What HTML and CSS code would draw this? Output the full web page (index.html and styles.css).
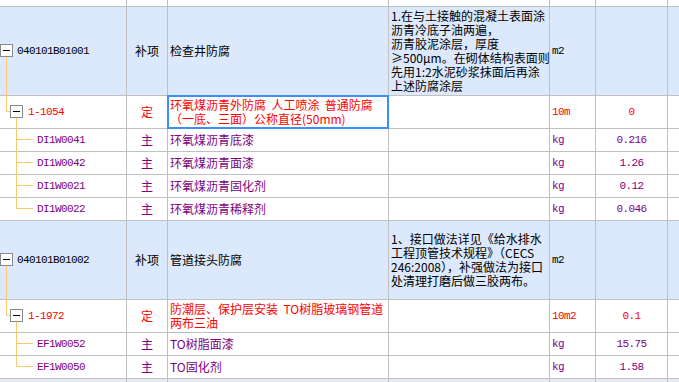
FILE: index.html
```html
<!DOCTYPE html>
<html lang="zh">
<head>
<meta charset="utf-8">
<title>清单</title>
<link rel="stylesheet" href="styles.css">
</head>
<body>
<div class="sheet">
  <div class="c"></div><div class="c"></div><div class="c"></div><div class="c"></div><div class="c"></div><div class="c"></div><div class="c"></div>

  <div class="c b code l1">040101B01001</div>
  <div class="c b ctr">补项</div>
  <div class="c b name">检查井防腐</div>
  <div class="c b desc">1.在与土接触的混凝土表面涂<br>沥青冷底子油两遍，<br>沥青胶泥涂层，厚度<br>≥500μm。在砌体结构表面则<br>先用1:2水泥砂浆抹面后再涂<br>上述防腐涂层</div>
  <div class="c b unit">m2</div>
  <div class="c b"></div>
  <div class="c b"></div>

  <div class="c code l2 red">1-1054</div>
  <div class="c ctr red">定</div>
  <div class="c name two red sel">环氧煤沥青外防腐&nbsp; 人工喷涂&nbsp; 普通防腐<br>（一底、三面）公称直径(50mm)</div>
  <div class="c"></div>
  <div class="c unit red">10m</div>
  <div class="c num red">0</div>
  <div class="c"></div>

  <div class="c code l3 pur">DI1W0041</div>
  <div class="c ctr pur">主</div>
  <div class="c name pur">环氧煤沥青底漆</div>
  <div class="c"></div>
  <div class="c unit pur">kg</div>
  <div class="c num pur">0.216</div>
  <div class="c"></div>

  <div class="c code l3 pur">DI1W0042</div>
  <div class="c ctr pur">主</div>
  <div class="c name pur">环氧煤沥青面漆</div>
  <div class="c"></div>
  <div class="c unit pur">kg</div>
  <div class="c num pur">1.26</div>
  <div class="c"></div>

  <div class="c code l3 pur">DI1W0021</div>
  <div class="c ctr pur">主</div>
  <div class="c name pur">环氧煤沥青固化剂</div>
  <div class="c"></div>
  <div class="c unit pur">kg</div>
  <div class="c num pur">0.12</div>
  <div class="c"></div>

  <div class="c code l3 pur">DI1W0022</div>
  <div class="c ctr pur">主</div>
  <div class="c name pur">环氧煤沥青稀释剂</div>
  <div class="c"></div>
  <div class="c unit pur">kg</div>
  <div class="c num pur">0.046</div>
  <div class="c"></div>

  <div class="c b code l1">040101B01002</div>
  <div class="c b ctr">补项</div>
  <div class="c b name">管道接头防腐</div>
  <div class="c b desc">1、接口做法详见《给水排水<br>工程顶管技术规程》（CECS<br>246:2008），补强做法为接口<br>处清理打磨后做三胶两布。</div>
  <div class="c b unit">m2</div>
  <div class="c b"></div>
  <div class="c b"></div>

  <div class="c code l2 red">1-1972</div>
  <div class="c ctr red">定</div>
  <div class="c name two red">防潮层、保护层安装&nbsp; TO树脂玻璃钢管道<br>两布三油</div>
  <div class="c"></div>
  <div class="c unit red">10m2</div>
  <div class="c num red">0.1</div>
  <div class="c"></div>

  <div class="c code l3 pur">EF1W0052</div>
  <div class="c ctr pur">主</div>
  <div class="c name pur">TO树脂面漆</div>
  <div class="c"></div>
  <div class="c unit pur">kg</div>
  <div class="c num pur">15.75</div>
  <div class="c"></div>

  <div class="c code l3 pur">EF1W0050</div>
  <div class="c ctr pur">主</div>
  <div class="c name pur">TO固化剂</div>
  <div class="c"></div>
  <div class="c unit pur">kg</div>
  <div class="c num pur">1.58</div>
  <div class="c"></div>

  <div class="c g"></div><div class="c g"></div><div class="c g"></div><div class="c g"></div><div class="c g"></div><div class="c g"></div><div class="c g"></div>

  <svg class="tree" width="40" height="382" viewBox="0 0 40 382">
    <g class="link">
      <path d="M6.5 57 V111.5 H10"/>
      <path d="M16.5 118 V208.5"/>
      <path d="M16.5 139.5 H33 M16.5 162.5 H33 M16.5 185.5 H33 M16.5 208.5 H33"/>
      <path d="M6.5 266 V315.5 H10"/>
      <path d="M16.5 322 V366.5"/>
      <path d="M16.5 343.5 H33 M16.5 366.5 H33"/>
    </g>
    <g class="box">
      <rect x="0.5" y="44.5" width="12" height="12"/>
      <rect x="10.5" y="105.5" width="12" height="12"/>
      <rect x="0.5" y="253.5" width="12" height="12"/>
      <rect x="10.5" y="309.5" width="12" height="12"/>
    </g>
    <g class="minus">
      <path d="M3 50.5 H10 M13 111.5 H20 M3 259.5 H10 M13 315.5 H20"/>
    </g>
  </svg>
</div>
</body>
</html>
```
FILE: styles.css
```css
html, body {
  margin: 0;
  padding: 0;
  background: #ffffff;
}

.sheet {
  position: relative;
  width: 679px;
  height: 382px;
  overflow: hidden;
  display: grid;
  grid-template-columns: 126px 40px 220px 160px 45px 71px 1fr;
  grid-template-rows: 6px 88px 32px 22px 22px 22px 22px 78px 32px 22px 22px 1fr;
  gap: 1px;
  background: #c0c0c0;
  font-family: "Noto Sans CJK SC", "Noto Sans", sans-serif;
  font-size: 12px;
  color: #000000;
}

.c {
  background: #ffffff;
  display: flex;
  align-items: center;
  min-width: 0;
  overflow: hidden;
  white-space: nowrap;
  line-height: 14px;
}

.b {
  background: #dce8fb;
}

.g {
  background: #e6ebf3;
}

.code {
  font-family: "Liberation Mono", monospace;
  font-size: 11px;
  letter-spacing: -0.6px;
}

.l1 { padding-left: 17px; }
.l2 { padding-left: 28px; }
.l3 { padding-left: 37px; }

.ctr {
  justify-content: center;
}

.name {
  padding-left: 2px;
}

.two {
  line-height: 14px;
}

.desc {
  padding-left: 2px;
  line-height: 14px;
}

.unit {
  padding-left: 2px;
  font-family: "Liberation Mono", monospace;
  font-size: 11px;
  letter-spacing: -0.6px;
}

.num {
  justify-content: center;
  font-family: "Liberation Mono", monospace;
  font-size: 11px;
  letter-spacing: -0.6px;
}

.red { color: #ff0000; }
.pur { color: #800080; }

.sel {
  position: relative;
  z-index: 1;
  outline: 2px solid #3b8ff5;
  outline-offset: -1px;
}

.tree {
  position: absolute;
  left: 0;
  top: 0;
  z-index: 2;
  pointer-events: none;
}

.tree .link path {
  fill: none;
  stroke: #fcc872;
  stroke-width: 1;
}

.tree .box rect {
  fill: #ffffff;
  stroke: #8a8a8a;
  stroke-width: 1;
}

.tree .minus path {
  fill: none;
  stroke: #000000;
  stroke-width: 1;
}
```
